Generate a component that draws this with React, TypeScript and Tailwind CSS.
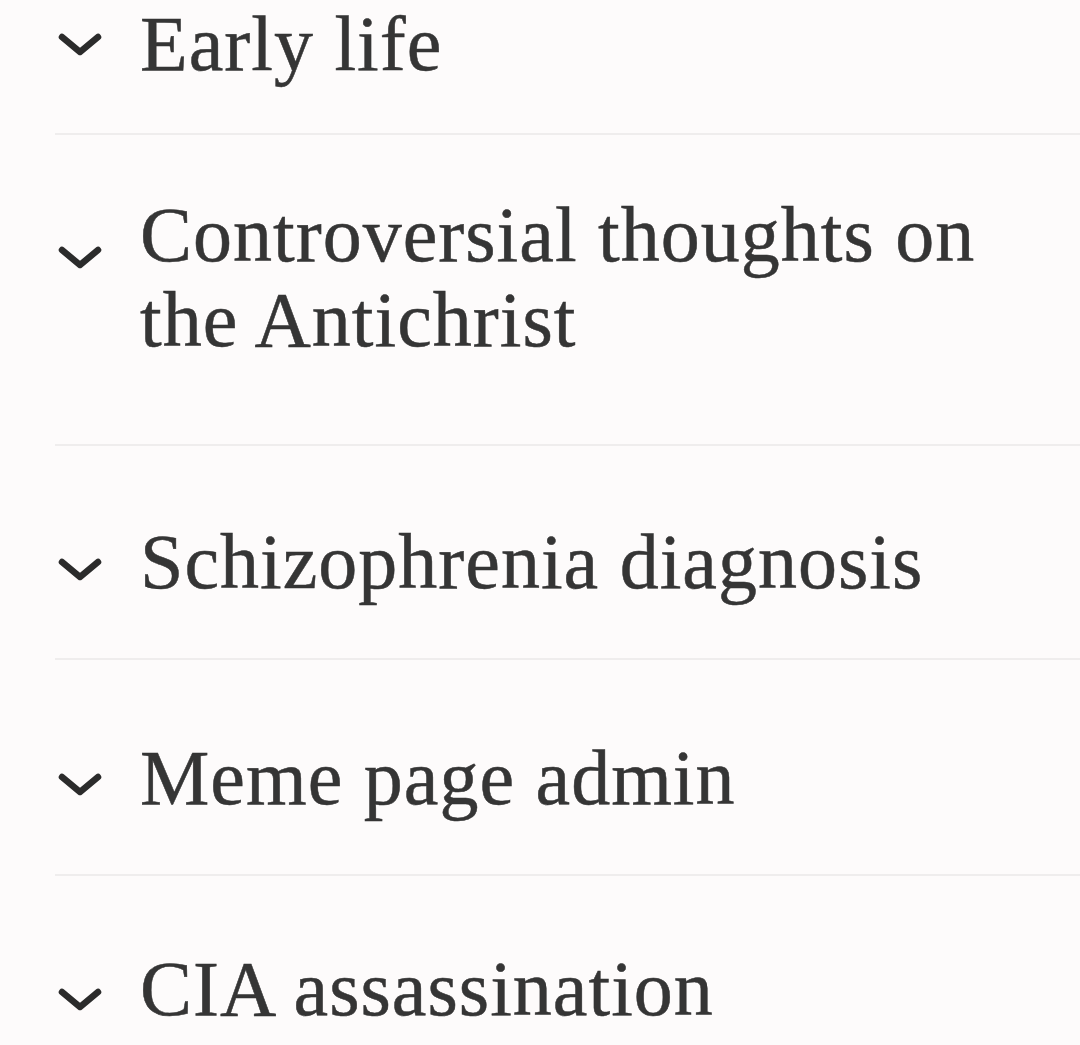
import React from 'react';

interface Section {
  title: string;
  rowClass: string;
  chevronClass: string;
}

// spacing in the source is uneven, so each row carries its own padding
const sections: Section[] = [
  { title: 'Early life', rowClass: 'pt-[1px] pb-[47px]', chevronClass: 'mt-[31px]' },
  { title: 'Controversial thoughts on the Antichrist', rowClass: 'pt-[57px] pb-[82px]', chevronClass: 'mt-[53px]' },
  { title: 'Schizophrenia diagnosis', rowClass: 'pt-[73px] pb-[54px]', chevronClass: 'mt-[38px]' },
  { title: 'Meme page admin', rowClass: 'pt-[75px] pb-[54px]', chevronClass: 'mt-[37px]' },
  { title: 'CIA assassination', rowClass: 'pt-[70px] pb-[40px]', chevronClass: 'mt-[41px]' },
];

const Chevron: React.FC<{ className?: string }> = ({ className }) => (
  <svg
    width="46"
    height="26"
    viewBox="0 0 46 26"
    fill="none"
    stroke="#2b2b2b"
    strokeWidth="6.5"
    strokeLinecap="round"
    strokeLinejoin="round"
    className={className}
  >
    <path d="M5 5 L23 20 L41 5" />
  </svg>
);

const App: React.FC = () => {
  return (
    <div className="w-[1080px] h-[1045px] overflow-hidden bg-[#fdfbfb] pl-[55px]">
      {sections.map((s, i) => (
        <div
          key={i}
          className={`flex items-start ${i < sections.length - 1 ? 'border-b-2 border-[#efeded]' : ''} ${s.rowClass}`}
        >
          <div className="w-[85px] shrink-0 flex pl-[2px]">
            <Chevron className={s.chevronClass} />
          </div>
          <div className="max-w-[880px] text-[78px] leading-[85px] tracking-[1px] text-[#353535] [-webkit-text-stroke:0.5px_#353535] font-['Liberation_Serif',serif]">
            {s.title}
          </div>
        </div>
      ))}
    </div>
  );
};

export default App;
